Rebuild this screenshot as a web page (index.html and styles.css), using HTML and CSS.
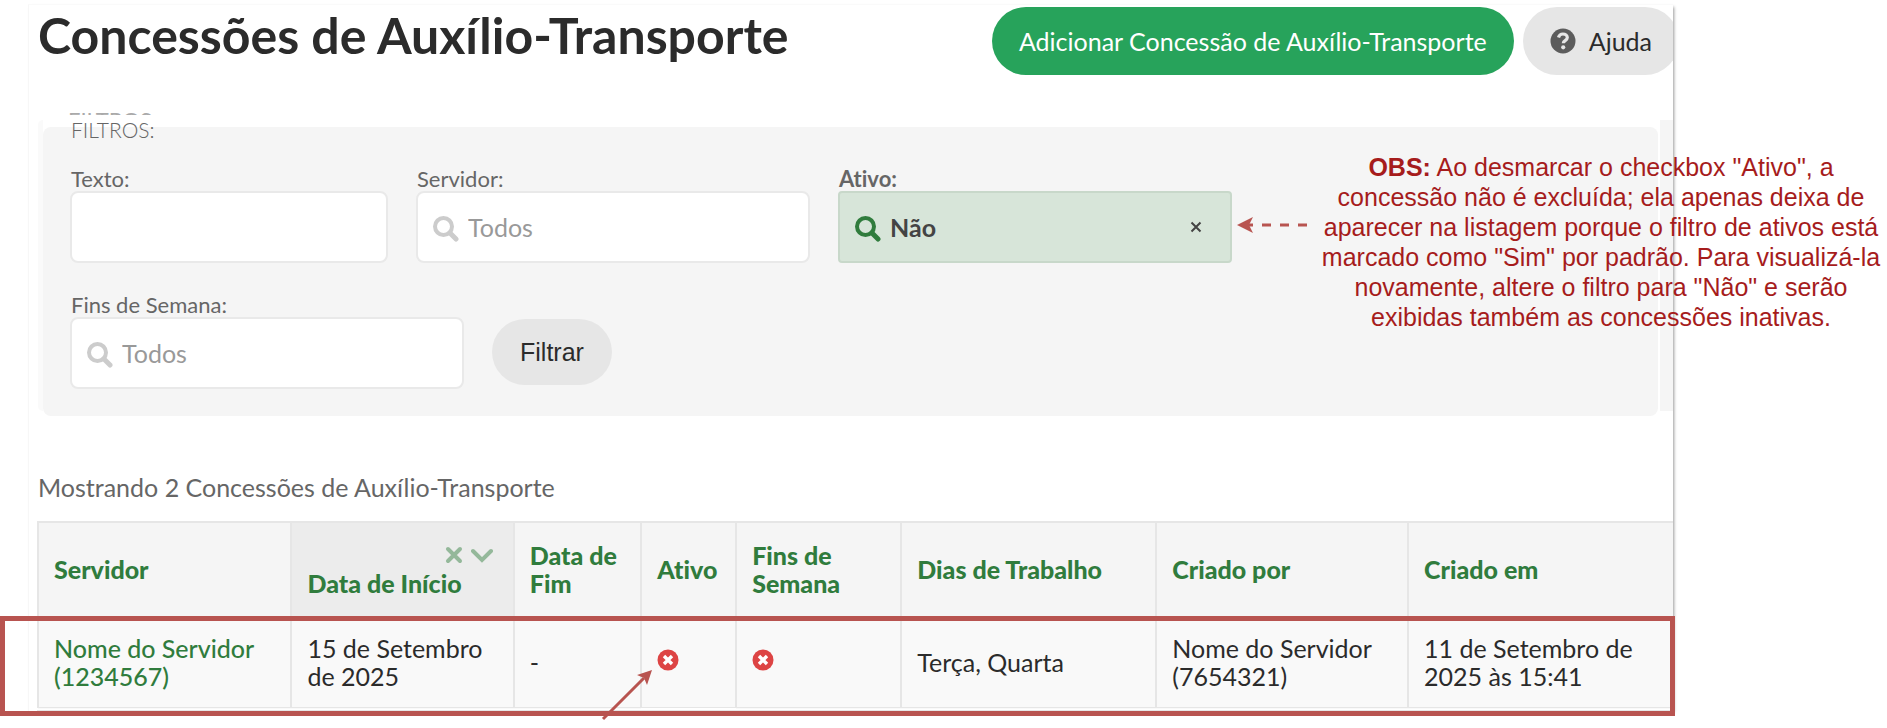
FILE: index.html
```html
<!DOCTYPE html>
<html lang="pt-BR">
<head>
    <meta charset="UTF-8">
    <meta name="viewport" content="width=device-width, initial-scale=1.0">
    <title>Concessões de Auxílio-Transporte</title>
    <link rel="stylesheet" href="styles.css">
</head>
<body>
    <svg class="sprite" aria-hidden="true">
        <symbol id="lupa" viewBox="0 0 26 26">
            <circle cx="10.500" cy="10.500" r="8.500" fill="none" stroke="currentColor" stroke-width="4"/>
            <path d="M17 17l6 6" fill="none" stroke="currentColor" stroke-width="5" stroke-linecap="round"/>
        </symbol>
        <symbol id="negado" viewBox="0 0 22 22">
            <circle cx="11" cy="11" r="10.500" fill="#dd4444"/>
            <path d="M7 7l8 8M15 7l-8 8" stroke="#fff" stroke-width="3.400"/>
        </symbol>
    </svg>

    <main class="painel">
        <header class="topo">
            <h1>Concessões de Auxílio-Transporte</h1>
            <div class="acoes">
                <button type="button" class="btn btn-sucesso">Adicionar Concessão de Auxílio-Transporte</button>
                <button type="button" class="btn">
                    <svg class="icone-ajuda" viewBox="0 0 26 26" aria-hidden="true">
                        <circle cx="13" cy="13" r="12.500" fill="#5c5c5c"/>
                        <path d="M8.500 9.500c.6-2.400 2.300-3.500 4.400-3.500 2.500 0 4.400 1.400 4.400 3.600 0 3-4 3-4 5.600" fill="none" stroke="#e6e6e6" stroke-width="3.200"/>
                        <circle cx="13.200" cy="19.300" r="2.100" fill="#e6e6e6"/>
                    </svg>
                    Ajuda
                </button>
            </div>
        </header>

        <form class="filtros">
            <div class="filtros-sombra" aria-hidden="true">FILTROS</div>
            <h2>FILTROS:</h2>
            <div class="campos">
                <div class="campo campo-texto">
                    <label for="texto">Texto:</label>
                    <input type="text" id="texto">
                </div>
                <div class="campo">
                    <label for="servidor">Servidor:</label>
                    <div class="selecao">
                        <svg class="lupa" aria-hidden="true"><use href="#lupa"/></svg>
                        <select id="servidor"><option>Todos</option></select>
                    </div>
                </div>
                <div class="campo campo-ativo">
                    <label for="ativo">Ativo:</label>
                    <div class="selecao">
                        <svg class="lupa" aria-hidden="true"><use href="#lupa"/></svg>
                        <select id="ativo"><option>Não</option><option>Sim</option></select>
                        <button type="button" class="limpar" aria-label="Limpar filtro">
                            <svg viewBox="0 0 12 12"><path d="M1.500 1.500l9 9M10.500 1.500l-9 9" stroke="#444" stroke-width="2"/></svg>
                        </button>
                    </div>
                    <svg class="seta-filtro" viewBox="0 0 70 18" aria-hidden="true">
                        <path d="M0 9L16 1L12 9L16 17Z" fill="#b85450"/>
                        <path d="M12 9h4M25 9h9M43 9h9M61 9h9" stroke="#b85450" stroke-width="3"/>
                    </svg>
                </div>
                <div class="campo">
                    <label for="fins">Fins de Semana:</label>
                    <div class="selecao">
                        <svg class="lupa" aria-hidden="true"><use href="#lupa"/></svg>
                        <select id="fins"><option>Todos</option></select>
                    </div>
                </div>
                <button type="submit" class="btn btn-filtrar">Filtrar</button>
            </div>
        </form>

        <p class="total">Mostrando 2 Concessões de Auxílio-Transporte</p>

        <div class="tabela">
            <table>
                <colgroup>
                    <col class="c-servidor">
                    <col class="c-inicio">
                    <col class="c-fim">
                    <col class="c-ativo">
                    <col class="c-fins">
                    <col class="c-dias">
                    <col class="c-por">
                    <col>
                </colgroup>
                <thead>
                    <tr>
                        <th><a href="#">Servidor</a></th>
                        <th class="ordenada">
                            <span class="ordem">
                                <svg viewBox="0 0 18 18" aria-hidden="true"><path d="M3 3l12 12M15 3L3 15"/></svg>
                                <svg viewBox="0 0 22 18" aria-hidden="true"><path d="M2 5l9 9 9-9"/></svg>
                            </span>
                            <a href="#">Data de Início</a>
                        </th>
                        <th><a href="#">Data de Fim</a></th>
                        <th><a href="#">Ativo</a></th>
                        <th><a href="#">Fins de Semana</a></th>
                        <th><a href="#">Dias de Trabalho</a></th>
                        <th><a href="#">Criado por</a></th>
                        <th><a href="#">Criado em</a></th>
                    </tr>
                </thead>
                <tbody>
                    <tr>
                        <td><a href="#">Nome do Servidor (1234567)</a></td>
                        <td>15 de Setembro de 2025</td>
                        <td>-</td>
                        <td class="celula-ativo">
                            <svg class="status" role="img" aria-label="Não"><use href="#negado"/></svg>
                            <svg class="seta-status" viewBox="0 0 52 52" aria-hidden="true">
                                <path d="M2 50L43 9" stroke="#b85450" stroke-width="3"/>
                                <path d="M51 1L36 6L43 9L46 16Z" fill="#b85450"/>
                            </svg>
                        </td>
                        <td><svg class="status" role="img" aria-label="Não"><use href="#negado"/></svg></td>
                        <td>Terça, Quarta</td>
                        <td>Nome do Servidor (7654321)</td>
                        <td>11 de Setembro de 2025 às 15:41</td>
                    </tr>
                </tbody>
            </table>
        </div>
    </main>

    <aside class="observacao">
        <strong>OBS:</strong> Ao desmarcar o checkbox "Ativo", a concessão não é excluída; ela apenas deixa de aparecer na listagem porque o filtro de ativos está marcado como "Sim" por padrão. Para visualizá-la novamente, altere o filtro para "Não" e serão exibidas também as concessões inativas.
    </aside>
</body>
</html>
```
FILE: styles.css
```css
:root {
    --verde: #307c3d;
    --verde-botao: #27a35b;
    --cinza-fundo: #f5f5f5;
    --cinza-botao: #e6e6e6;
    --borda: #e6e6e6;
    --texto: #2b2b2b;
    --texto-suave: #666666;
    --destaque: #b85450;
}
*,
*::before,
*::after {
    box-sizing: border-box;
}
body {
    position: relative;
    margin: 0;
    padding: 4px 214px 17px 28px;
    background-color: #ffffff;
    color: var(--texto);
    font-family: Lato, 'Open Sans', sans-serif;
    font-size: 25px;
    line-height: 28px;
    font-variant-ligatures: none;
}
.sprite {
    display: none;
}
a {
    color: var(--verde);
    text-decoration: none;
}
.painel {
    border-left: 1px solid #f7f7f7;
    border-top: 1px solid #fafafa;
    box-shadow: 2px 2px 3px -1px rgba(0, 0, 0, 0.4);
}

/* Cabeçalho */
.topo {
    display: flex;
    justify-content: space-between;
    align-items: flex-start;
    padding: 2px 0 0 9px;
    overflow: hidden;
}
h1 {
    margin: 0;
    font-size: 50px;
    line-height: 56px;
    font-weight: 700;
}
.acoes {
    display: flex;
    flex-shrink: 0;
    gap: 9px;
    margin-right: -6px;
}
.btn {
    display: flex;
    align-items: center;
    gap: 13px;
    height: 68px;
    padding: 0 27px;
    border: none;
    border-radius: 34px;
    background-color: var(--cinza-botao);
    color: var(--texto);
    font-family: inherit;
    font-size: 25px;
    cursor: pointer;
}
.btn-sucesso {
    background-color: var(--verde-botao);
    color: #ffffff;
}
.icone-ajuda {
    width: 26px;
    height: 26px;
}

/* Filtros */
.filtros {
    position: relative;
    margin: 52px 15px 0 14px;
    padding: 0 27px 27px;
    border-radius: 8px;
    background-color: var(--cinza-fundo);
}
.filtros::before,
.filtros::after {
    content: '';
    position: absolute;
    top: -7px;
    bottom: 5px;
}
.filtros::before {
    left: -5px;
    width: 5px;
    border-radius: 8px 0 0 8px;
    background-color: #fafafa;
}
.filtros::after {
    right: -15px;
    width: 13px;
    background-color: var(--cinza-fundo);
}
.filtros-sombra {
    position: absolute;
    top: -14px;
    left: 25px;
    height: 2px;
    overflow: hidden;
    color: #aaaaaa;
    font-size: 22px;
    line-height: 14px;
}
h2 {
    position: relative;
    top: -9px;
    margin: 0 0 14px;
    padding-left: 1px;
    color: var(--texto-suave);
    font-size: 21px;
    line-height: 24px;
    font-weight: 300;
}
.campos {
    display: flex;
    flex-wrap: wrap;
    align-items: flex-end;
    gap: 28px;
}
.campo {
    position: relative;
    width: 394px;
}
.campo-texto {
    width: 318px;
}
label {
    display: block;
    padding: 2px 0 0 1px;
    color: var(--texto-suave);
    font-size: 22px;
    line-height: 24px;
}
input,
select {
    display: block;
    width: 100%;
    height: 72px;
    border: 2px solid #e9e9e9;
    border-radius: 8px;
    background-color: #ffffff;
    color: #999999;
    font-family: inherit;
    font-size: 25px;
    appearance: none;
}
input {
    padding: 0 16px;
}
select {
    padding: 0 48px 0 50px;
}
.selecao {
    position: relative;
}
.lupa {
    position: absolute;
    top: 25px;
    left: 17px;
    width: 26px;
    height: 26px;
    color: #cccccc;
    pointer-events: none;
}
.campo-ativo label {
    font-weight: 700;
}
.campo-ativo select {
    border-color: #c8d8ca;
    border-radius: 4px;
    background-color: #d7e5d9;
    color: #444444;
    font-weight: 700;
}
.campo-ativo .lupa {
    color: var(--verde);
}
.limpar {
    position: absolute;
    top: 24px;
    right: 24px;
    width: 24px;
    height: 24px;
    padding: 6px;
    border: none;
    background: none;
    cursor: pointer;
}
.limpar svg {
    display: block;
    width: 12px;
    height: 12px;
}
.seta-filtro {
    position: absolute;
    top: 51px;
    left: 399px;
    width: 70px;
    height: 18px;
}
.btn-filtrar {
    height: 66px;
    margin-bottom: 4px;
    padding: 0 28px;
    font-family: 'Liberation Sans', Arial, sans-serif;
}

/* Listagem */
.total {
    margin: 56px 9px 19px;
    color: var(--texto-suave);
    line-height: 30px;
}
.tabela {
    position: relative;
    padding-left: 8px;
}
/* Moldura em volta do registro */
.tabela::after {
    content: '';
    position: absolute;
    left: -29px;
    right: -2px;
    bottom: -5px;
    height: 100px;
    border: 5px solid var(--destaque);
    pointer-events: none;
}
table {
    width: 100%;
    border-collapse: collapse;
    table-layout: fixed;
}
.c-servidor { width: 15.5%; }
.c-inicio { width: 13.6%; }
.c-fim { width: 7.8%; }
.c-ativo { width: 5.8%; }
.c-fins { width: 10.1%; }
.c-dias { width: 15.6%; }
.c-por { width: 15.4%; }
th,
td {
    padding: 15px 15px 17px;
    border: 2px solid var(--borda);
    border-right: none;
    text-align: left;
    vertical-align: middle;
}
th {
    padding: 18px 15px 20px;
    background-color: var(--cinza-fundo);
    font-weight: 900;
}
td {
    border-bottom: 4px double var(--borda);
    background-color: #f9f9f9;
}
td a {
    font-weight: 500;
}
.ordenada {
    background-color: #ececec;
}
.ordem {
    display: flex;
    justify-content: flex-end;
    align-items: center;
    gap: 8px;
    height: 28px;
    padding-right: 5px;
}
.ordem svg {
    height: 18px;
    fill: none;
    stroke: #94b89a;
    stroke-width: 4;
    stroke-linecap: round;
}
.celula-ativo {
    position: relative;
}
.status {
    display: block;
    width: 22px;
    height: 22px;
    margin-bottom: 4px;
}
.seta-status {
    position: absolute;
    top: 50px;
    right: 82px;
    width: 52px;
    height: 52px;
}

/* Anotação */
.observacao {
    position: absolute;
    top: 152px;
    right: 4px;
    width: 564px;
    color: #a61c1c;
    font-family: 'Liberation Sans', Arial, sans-serif;
    line-height: 30px;
    text-align: center;
}
```
